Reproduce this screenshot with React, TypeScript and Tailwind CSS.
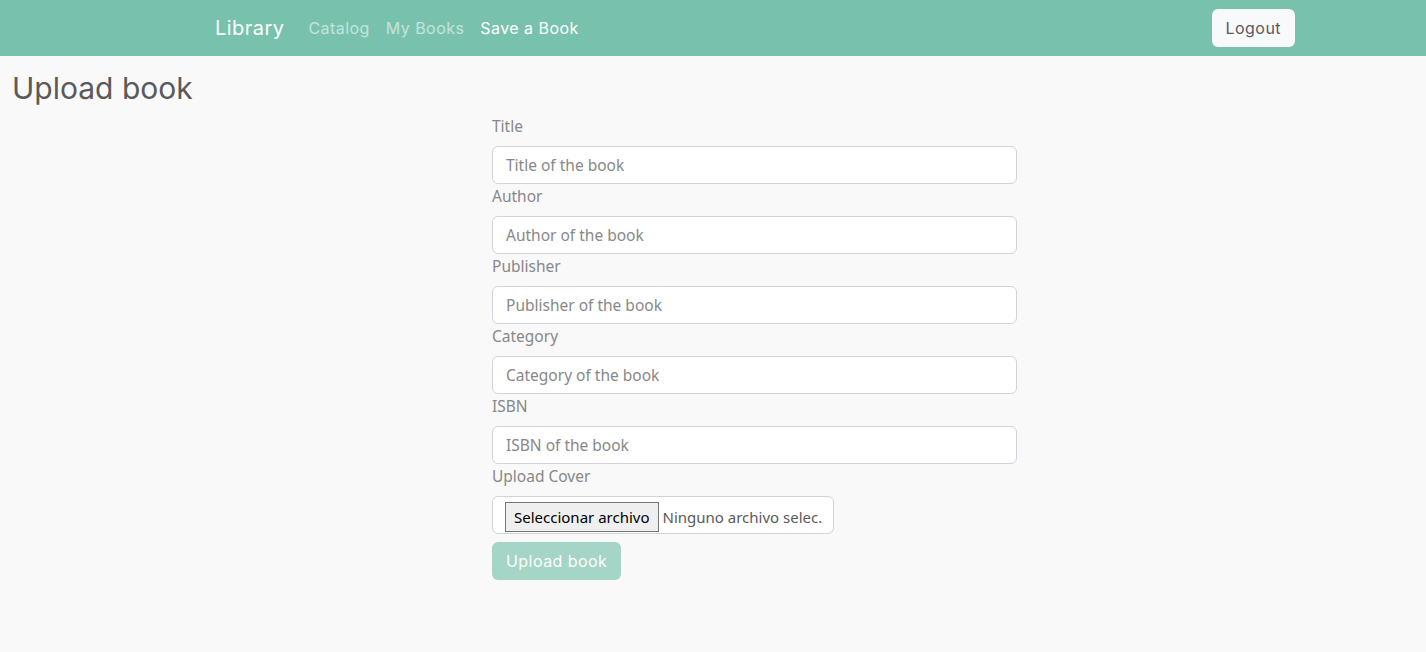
const heading = { fontFamily: "Inter, 'Open Sans', sans-serif" };
const body = { fontFamily: "'Noto Sans', 'Open Sans', sans-serif" };

const fields = [
  { label: "Title", placeholder: "Title of the book" },
  { label: "Author", placeholder: "Author of the book" },
  { label: "Publisher", placeholder: "Publisher of the book" },
  { label: "Category", placeholder: "Category of the book" },
  { label: "ISBN", placeholder: "ISBN of the book" },
];

export default function App() {
  return (
    <div className="min-h-[652px] bg-[#f9f9f9]" style={body}>
      <nav className="h-14 bg-[#78c2ad] flex items-center pl-[215px] pr-[131px] tracking-[0.45px]" style={heading}>
        <span className="text-white text-[20px] mr-[16px]">Library</span>
        <div className="flex items-center text-base">
          <a className="px-2 text-white/55">Catalog</a>
          <a className="px-2 text-white/55">My Books</a>
          <a className="px-2 text-white">Save a Book</a>
        </div>
        <button className="ml-auto h-[38px] px-[14px] rounded-md bg-[#f8f9fa] text-[#5a5a5a] text-base">
          Logout
        </button>
      </nav>

      <main className="px-3">
        <h2 className="pt-[14px] text-[30px] leading-[36px] text-[#5a5a5a] mb-2" style={heading}>
          Upload book
        </h2>
        <form className="ml-[480px] w-[525px] text-[15.5px]">
          {fields.map((f) => (
            <div key={f.label}>
              <label className="block leading-6 mb-2 text-[#888]">{f.label}</label>
              <input
                placeholder={f.placeholder}
                className="w-full h-[38px] px-[13px] bg-white border border-[#ced4da] rounded-md text-[#5a5a5a] placeholder:text-[#888] outline-none"
              />
            </div>
          ))}
          <label className="block leading-6 mb-2 text-[#888]">Upload Cover</label>
          <div className="w-[342px] h-[38px] bg-white border border-[#ced4da] rounded-md flex items-center pl-3">
            <span className="h-[30px] mt-[4px] px-[8px] flex items-center bg-[#efefef] border border-[#767676] text-black text-[15px]">
              Seleccionar archivo
            </span>
            <span className="ml-[4px] text-[#5a5a5a] text-[15px] mt-[4px]">Ninguno archivo selec.</span>
          </div>
          <button
            type="button"
            className="mt-2 h-[38px] px-[14px] rounded-md bg-[#78c2ad] opacity-65 text-white text-base tracking-[0.45px]"
            style={heading}
          >
            Upload book
          </button>
        </form>
      </main>
    </div>
  );
}
